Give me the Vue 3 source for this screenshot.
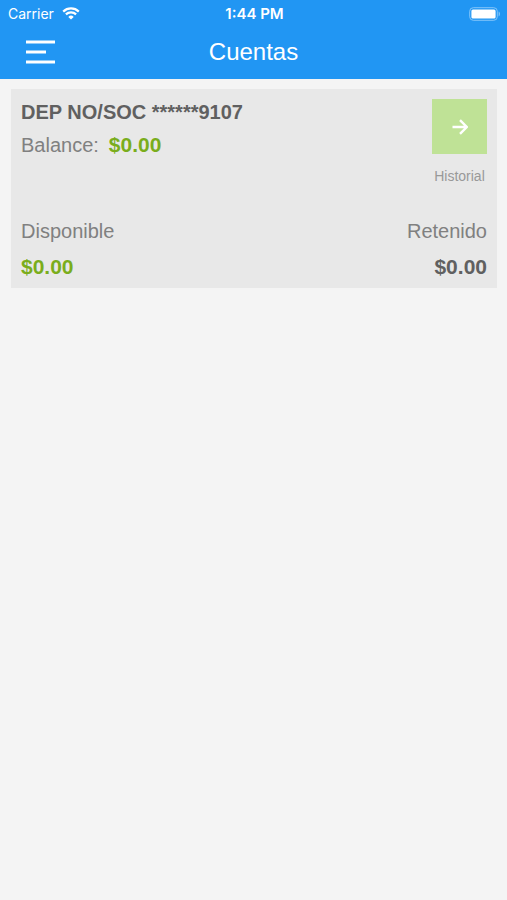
<script setup>
const account = {
  name: 'DEP NO/SOC ******9107',
  balance: '$0.00',
  available: '$0.00',
  held: '$0.00',
}
</script>

<template>
  <div class="screen">
    <header class="top">
      <div class="status">
        <div class="carrier">
          <span>Carrier</span>
          <svg class="wifi" viewBox="0 0 18 13" aria-hidden="true">
            <path d="M1.2 4.6a11.2 11.2 0 0 1 15.6 0" />
            <path d="M3.9 7.4a7.3 7.3 0 0 1 10.2 0" />
            <path class="dot" d="M9 12.6 6.3 9.9a3.9 3.9 0 0 1 5.4 0z" />
          </svg>
        </div>
        <span class="time">1:44 PM</span>
        <div class="power">
          <svg class="battery" viewBox="0 0 32 14" aria-hidden="true">
            <rect class="shell" x="0.7" y="0.7" width="27.6" height="12.6" rx="3.6" />
            <rect class="charge" x="2.4" y="2.4" width="24.2" height="9.2" rx="1.6" />
            <path class="cap" d="M29.6 4.6c1.8.6 1.8 4.2 0 4.8z" />
          </svg>
        </div>
      </div>
      <nav class="bar">
        <button class="menu" type="button" aria-label="Menú">
          <svg viewBox="0 0 29 24" aria-hidden="true">
            <path d="M0 2h29M0 12h20M0 22h29" />
          </svg>
        </button>
        <h1>Cuentas</h1>
      </nav>
    </header>

    <main>
      <article class="card">
        <div class="row">
          <div class="summary">
            <h2>{{ account.name }}</h2>
            <p class="balance">
              <span class="label">Balance:</span>
              <strong class="green">{{ account.balance }}</strong>
            </p>
          </div>
          <div class="history">
            <button id="history" class="go" type="button">
              <svg viewBox="0 0 16 16" aria-hidden="true">
                <path d="M0.5 8h14M8 1.2 14.8 8 8 14.8" />
              </svg>
            </button>
            <label for="history">Historial</label>
          </div>
        </div>
        <div class="row">
          <div class="amount">
            <span class="label">Disponible</span>
            <strong class="green">{{ account.available }}</strong>
          </div>
          <div class="amount end">
            <span class="label">Retenido</span>
            <strong>{{ account.held }}</strong>
          </div>
        </div>
      </article>
    </main>
  </div>
</template>

<style>
body {
  margin: 0;
  background: #f4f4f4;
}
</style>

<style scoped>
.screen {
  min-height: 100vh;
  background: #f4f4f4;
  color: #606060;
  font-family: "Liberation Sans", Arial, sans-serif;
}

h1, h2, p {
  margin: 0;
}

button {
  border: 0;
  padding: 0;
  cursor: pointer;
}

svg {
  display: block;
  fill: none;
  stroke: #fff;
}

.top {
  background: #2196f3;
  color: #fff;
}

.status {
  display: grid;
  grid-template-columns: 1fr auto 1fr;
  align-items: center;
  height: 27px;
  padding: 0 6px 0 8px;
  font: 400 14px/27px Inter, sans-serif;
}

.carrier {
  display: flex;
  align-items: center;
  gap: 8px;
}

.wifi {
  width: 18px;
  height: 13px;
  stroke-width: 2.2;
}

.wifi .dot {
  fill: #fff;
  stroke: none;
}

.time {
  font-size: 15px;
  font-weight: 600;
}

.power {
  display: flex;
  justify-content: flex-end;
}

.battery {
  width: 32px;
  height: 14px;
}

.shell {
  stroke: #83c5f9;
  stroke-width: 1;
}

.charge {
  fill: #fff;
  stroke: none;
}

.cap {
  fill: #83c5f9;
  stroke: none;
}

.bar {
  display: grid;
  grid-template-columns: 1fr auto 1fr;
  align-items: center;
  height: 50px;
  padding: 0 26px 2px;
}

.menu {
  width: 29px;
  background: none;
}

.menu svg {
  width: 29px;
  height: 24px;
  stroke-width: 3;
}

h1 {
  font-size: 24px;
  font-weight: 400;
  line-height: 48px;
}

main {
  padding: 10px 10px 10px 11px;
}

.card {
  display: flex;
  flex-direction: column;
  gap: 28px;
  padding: 10px 10px 4px;
  background: #e8e8e8;
  font-size: 21px;
  line-height: 35px;
}

.row {
  display: flex;
  justify-content: space-between;
}

h2 {
  font-size: 20px;
  font-weight: 700;
  line-height: 26px;
}

.balance {
  display: flex;
  gap: 10px;
  line-height: 40px;
}

.label {
  color: #808080;
  font-size: 20px;
}

.green {
  color: #7aad1c;
}

.history {
  display: flex;
  flex-direction: column;
  align-items: center;
  gap: 12px;
  color: #999;
  font-size: 14px;
  line-height: 20px;
}

.go {
  display: grid;
  place-items: center;
  width: 55px;
  height: 55px;
  background: #bfe296;
}

.go svg {
  width: 16px;
  height: 16px;
  stroke-width: 2.4;
}

.amount {
  display: flex;
  flex-direction: column;
}

.end {
  align-items: flex-end;
}
</style>
